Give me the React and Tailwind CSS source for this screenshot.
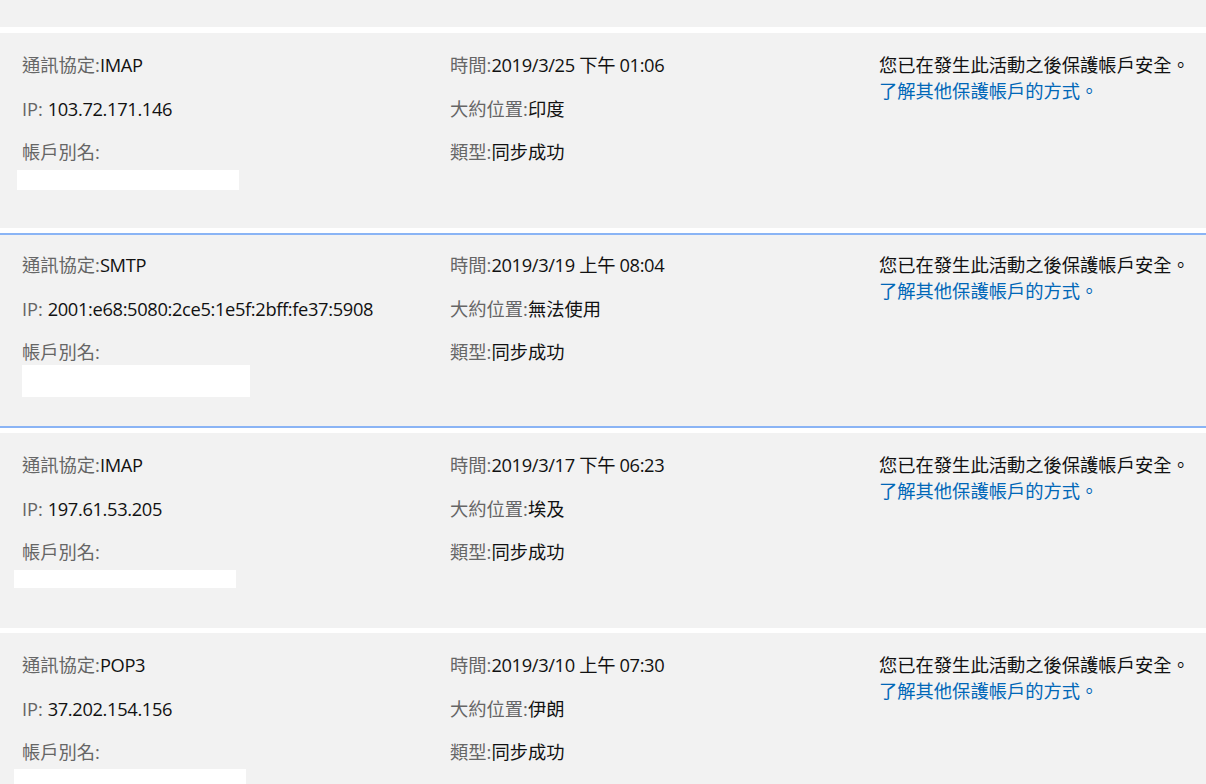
import React from "react";

const items = [
  {
    protocol: "IMAP",
    ip: "103.72.171.146",
    time: "2019/3/25 下午 01:06",
    loc: "印度",
    box: "ml-[-5px] mt-[5px] w-[222px] h-[20px]",
    active: false,
  },
  {
    protocol: "SMTP",
    ip: "2001:e68:5080:2ce5:1e5f:2bff:fe37:5908",
    time: "2019/3/19 上午 08:04",
    loc: "無法使用",
    box: "ml-0 mt-0 w-[228px] h-[32px]",
    active: true,
  },
  {
    protocol: "IMAP",
    ip: "197.61.53.205",
    time: "2019/3/17 下午 06:23",
    loc: "埃及",
    box: "ml-[-8px] mt-[5px] w-[222px] h-[18px]",
    active: false,
  },
  {
    protocol: "POP3",
    ip: "37.202.154.156",
    time: "2019/3/10 上午 07:30",
    loc: "伊朗",
    box: "ml-[-8px] mt-[4px] w-[232px] h-[20px]",
    active: false,
  },
];

function Row({ label, value, space, latin }) {
  return (
    <div className="h-[26px] leading-[26px] whitespace-nowrap">
      <span className="text-[#666666]">{label}</span>
      {space ? " " : ""}
      <span className={"text-[#111111] " + (latin ? "tracking-[-0.35px]" : "")}>
        {value}
      </span>
    </div>
  );
}

function Card({ it }) {
  return (
    <div
      className={
        "h-[195px] overflow-hidden bg-[#f2f2f2] pl-[22px] " +
        (it.active ? "border-y-2 border-[#8ab4f5] pt-[17px]" : "pt-[19px]")
      }
    >
      <div className="grid grid-cols-[428px_429px_1fr]">
        <div className="flex flex-col">
          <div className="flex flex-col gap-[17.5px]">
            <Row label="通訊協定:" value={it.protocol} latin />
            <Row label="IP:" value={it.ip} space latin />
            <Row label="帳戶別名:" value="" />
          </div>
          <div className={"bg-white " + it.box} />
        </div>
        <div className="flex flex-col gap-[17.5px]">
          <Row label="時間:" value={it.time} latin />
          <Row label="大約位置:" value={it.loc} />
          <Row label="類型:" value="同步成功" />
        </div>
        <div className="flex flex-col leading-[26px] whitespace-nowrap">
          <div className="text-[#111111]">您已在發生此活動之後保護帳戶安全。</div>
          <div className="text-[#0067b8]">了解其他保護帳戶的方式。</div>
        </div>
      </div>
    </div>
  );
}

export default function App() {
  return (
    <div
      className="w-[1206px] h-[784px] overflow-hidden bg-white text-[18.3px]"
      style={{ fontFamily: '"Open Sans", "Noto Sans CJK TC", sans-serif' }}
    >
      <div className="h-[27px] bg-[#f2f2f2]" />
      <div className="mt-[6px] flex flex-col gap-[5px]">
        {items.map((it, i) => (
          <Card key={i} it={it} />
        ))}
      </div>
    </div>
  );
}
